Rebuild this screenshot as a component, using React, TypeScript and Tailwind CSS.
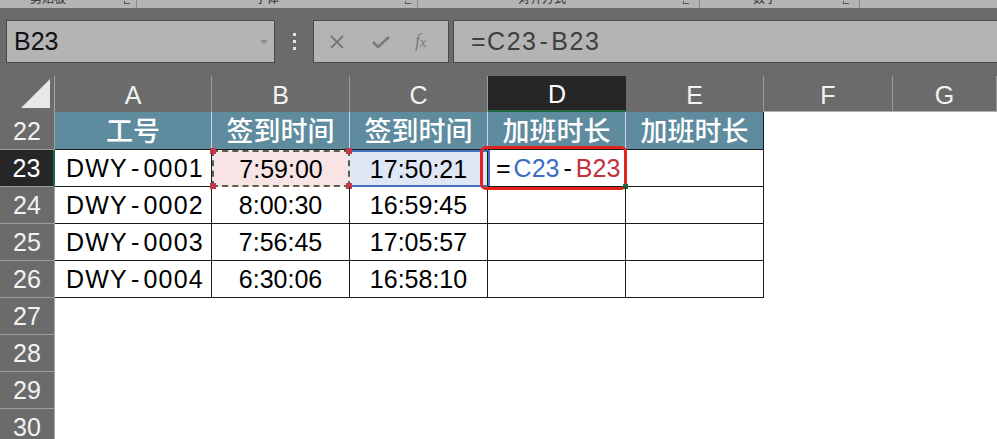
import React from "react";

const F = { fontFamily: '"Liberation Sans", "Noto Sans CJK SC", Arial, sans-serif' };
const CJK = { fontFamily: '"Noto Sans CJK SC", "Liberation Sans", sans-serif' };

const colW = ["w-[157px]", "w-[138px]", "w-[138px]", "w-[138px]", "w-[138px]", "w-[129px]", "flex-1"];
const colL = ["A", "B", "C", "D", "E", "F", "G"];

const data = [
  ["DWY-0001", "7:59:00", "17:50:21"],
  ["DWY-0002", "8:00:30", "16:59:45"],
  ["DWY-0003", "7:56:45", "17:05:57"],
  ["DWY-0004", "6:30:06", "16:58:10"],
];

function RowHead({ n, active }: { n: number; active?: boolean }) {
  return (
    <div
      className={
        "w-[55px] shrink-0 h-full flex items-center justify-center pt-[2px] text-[25px] border-b border-[#9d9d9d] " +
        (active ? "bg-[#262626] text-white border-r-2 border-r-[#1f6b3f]" : "bg-[#6b6b6b] text-[#f2f2f2] border-r border-r-[#a5a5a5]")
      }
    >
      {n}
    </div>
  );
}

function Id({ v }: { v: string }) {
  const [a, b] = v.split("-");
  return (
    <span className="tracking-[1.2px]">
      {a}
      <span className="mx-[3px]">-</span>
      {b}
    </span>
  );
}

export default function App() {
  return (
    <div className="w-[997px] h-[439px] overflow-hidden bg-white relative" style={F}>
      {/* ribbon strip remnants */}
      <div className="h-[8px] bg-[#b4b4b4] overflow-hidden flex text-[12px] text-[#333]" style={CJK}>
        <div className="w-[137px] flex items-end justify-between pl-[30px] pr-[6px] border-r border-[#8a8a8a]">
          <span className="leading-[12px] translate-y-[-4px]">剪贴板</span>
          <span className="w-[6px] h-[3px] border-l border-b border-[#555] mb-[4px]" />
        </div>
        <div className="w-[281px] flex items-end justify-between pl-[118px] pr-[6px] border-r border-[#8a8a8a]">
          <span className="leading-[12px] translate-y-[-4px]">字体</span>
          <span className="w-[6px] h-[3px] border-l border-b border-[#555] mb-[4px]" />
        </div>
        <div className="w-[282px] flex items-end justify-between pl-[100px] pr-[10px] border-r border-[#8a8a8a]">
          <span className="leading-[12px] translate-y-[-4px]">对齐方式</span>
          <span className="w-[6px] h-[3px] border-l border-b border-[#555] mb-[4px]" />
        </div>
        <div className="w-[160px] flex items-end justify-between pl-[53px] pr-[10px] border-r border-[#8a8a8a]">
          <span className="leading-[12px] translate-y-[-4px]">数字</span>
          <span className="w-[6px] h-[3px] border-l border-b border-[#555] mb-[4px]" />
        </div>
      </div>

      {/* formula toolbar */}
      <div className="h-[68px] bg-[#6b6b6b] flex items-start pt-[12px]">
        <div className="ml-[6px] w-[269px] h-[43px] bg-[#b4b4b4] border border-[#4a4a4a] flex items-center justify-between pl-[7px] pr-[4px]">
          <span className="text-[25px] text-[#111]">B23</span>
          <svg width="12" height="8" viewBox="0 0 12 8"><path d="M2 2 L6 6 L10 2 Z" fill="#8a8a8a" /></svg>
        </div>
        <div className="w-[38px] h-[43px] flex flex-col items-center justify-center gap-[4px]">
          <span className="w-[3px] h-[3px] bg-[#e6e6e6]" />
          <span className="w-[3px] h-[3px] bg-[#e6e6e6]" />
          <span className="w-[3px] h-[3px] bg-[#e6e6e6]" />
        </div>
        <div className="w-[136px] h-[43px] bg-[#b4b4b4] border border-[#4a4a4a] flex items-center pl-[15px]">
          <svg width="16" height="16" viewBox="0 0 16 16" className="mr-[26px]">
            <path d="M2 2 L14 14 M14 2 L2 14" stroke="#7a7a7a" strokeWidth="2" />
          </svg>
          <svg width="20" height="16" viewBox="0 0 20 16" className="mr-[24px]">
            <path d="M2 8 L7 13 L18 3" stroke="#7a7a7a" strokeWidth="2.6" fill="none" />
          </svg>
          <span className="text-[18px] italic text-[#7a7a7a]" style={{ fontFamily: '"Liberation Serif", serif' }}>
            f<span className="text-[14px]">x</span>
          </span>
        </div>
        <div className="ml-[4px] flex-1 -mr-[4px] h-[43px] bg-[#b4b4b4] border border-[#4a4a4a] flex items-center pl-[17px]">
          <span className="text-[25px] text-[#3f3f3f] tracking-[1.5px]">
            =C23<span className="mx-[2px]">-</span>B23
          </span>
        </div>
      </div>

      {/* column headers */}
      <div className="h-[36px] flex bg-[#6b6b6b]">
        <div className="w-[55px] shrink-0 h-full border-r border-[#a5a5a5] flex items-end justify-end pr-[3px] pb-[3px]">
          <svg width="30" height="30" viewBox="0 0 30 30">
            <path d="M0 29 L29 29 L29 0 Z" fill="#e8e8e8" />
          </svg>
        </div>
        {colL.map((c, i) => (
          <div
            key={c}
            className={
              colW[i] +
              " shrink-0 h-full flex items-center justify-center pt-[4px] text-[25px] " +
              (c === "D"
                ? "bg-[#262626] text-white border-b-2 border-[#1f6b3f]"
                : "text-[#f2f2f2] border-r border-[#9a9a9a] " + (i >= 5 ? "border-b border-b-[#b0b0b0]" : ""))
            }
          >
            {c}
          </div>
        ))}
      </div>

      {/* row 22 header row */}
      <div className="h-[38px] flex">
        <RowHead n={22} />
        {["工号", "签到时间", "签到时间", "加班时长", "加班时长"].map((t, i) => (
          <div
            key={i}
            className={
              colW[i] +
              " shrink-0 h-full bg-[#5e8b9e] text-white text-[27px] font-medium flex items-center justify-center border-b border-[#1a1a1a] " +
              (i === 4 ? "border-r border-r-[#1a1a1a]" : "border-r border-r-[#c9d8de]")
            }
            style={CJK}
          >
            {t}
          </div>
        ))}
        <div className={colW[5] + " shrink-0"} />
        <div className="flex-1" />
      </div>

      {/* data rows */}
      {data.map((r, ri) => {
        const active = ri === 0;
        return (
          <div key={ri} className="h-[37px] flex">
            <RowHead n={23 + ri} active={active} />
            <div className={colW[0] + " shrink-0 h-full border-r border-b border-[#1a1a1a] flex items-center pt-[2px] pl-[11px] text-[25px] text-black"}>
              <Id v={r[0]} />
            </div>
            <div
              className={
                colW[1] +
                " shrink-0 h-full flex items-center justify-center pt-[2px] text-[25px] text-black relative " +
                (active ? "bg-[#f8e4e4] border-2 border-dashed border-[#55604f]" : "border-r border-b border-[#1a1a1a]")
              }
            >
              {r[1]}
              {active && (
                <>
                  <span className="absolute -left-[4px] -top-[4px] w-[6px] h-[6px] bg-[#c23a4a]" />
                  <span className="absolute -right-[4px] -top-[4px] w-[6px] h-[6px] bg-[#c23a4a]" />
                  <span className="absolute -left-[4px] -bottom-[4px] w-[6px] h-[6px] bg-[#c23a4a]" />
                  <span className="absolute -right-[4px] -bottom-[4px] w-[6px] h-[6px] bg-[#c23a4a]" />
                </>
              )}
            </div>
            <div
              className={
                colW[2] +
                " shrink-0 h-full flex items-center justify-center pt-[2px] text-[25px] text-black " +
                (active ? "bg-[#dfe7f5] border-y-2 border-[#4472c4] border-r border-r-[#1a1a1a]" : "border-r border-b border-[#1a1a1a]")
              }
            >
              {r[2]}
            </div>
            <div className={colW[3] + " shrink-0 h-full border-r border-b border-[#1a1a1a] relative"}>
              {active && (
                <>
                  <div className="absolute -left-[8px] -top-[4px] w-[147px] h-[44px] border-[3px] border-[#e3221e] rounded-[6px] flex items-center pt-[2px] pl-[13px] text-[25px]">
                    <span className="text-black">=</span>
                    <span className="text-[#3b6cc6] ml-[3px]">C23</span>
                    <span className="text-black mx-[4px]">-</span>
                    <span className="text-[#c2323a]">B23</span>
                  </div>
                  <span className="absolute left-0 top-0 w-[2px] h-full bg-[#4472c4]" />
                  <span className="absolute -right-[3px] -bottom-[3px] w-[5px] h-[5px] bg-[#1f6b3f]" />
                </>
              )}
            </div>
            <div className={colW[4] + " shrink-0 h-full border-r border-b border-[#1a1a1a]"} />
            <div className={colW[5] + " shrink-0"} />
            <div className="flex-1" />
          </div>
        );
      })}

      {[27, 28, 29, 30].map((n) => (
        <div key={n} className="h-[37px] flex">
          <RowHead n={n} />
          <div className="flex-1" />
        </div>
      ))}
    </div>
  );
}
